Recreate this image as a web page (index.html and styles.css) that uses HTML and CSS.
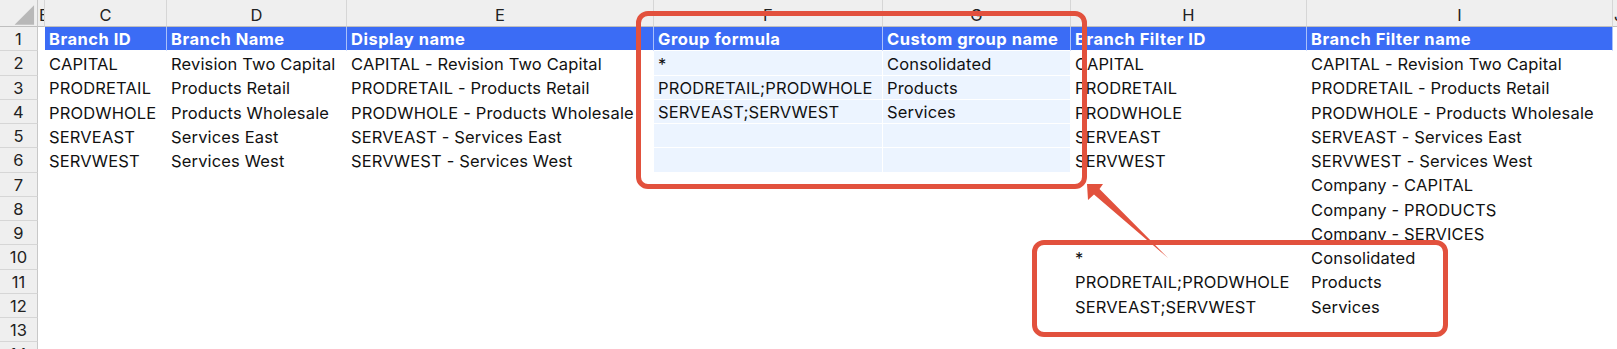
FILE: index.html
```html
<!DOCTYPE html>
<html>
<head>
<meta charset="utf-8">
<link rel="stylesheet" href="styles.css">
</head>
<body>
<div class="page">
<div class="sheet">
  <div class="ch corner"><svg width="38" height="27" viewBox="0 0 38 27"><polygon points="15,25 35,5 35,25" fill="#b8b8b8"/></svg></div>
  <div class="ch chb">B</div>
  <div class="ch">C</div>
  <div class="ch">D</div>
  <div class="ch">E</div>
  <div class="ch">F</div>
  <div class="ch">G</div>
  <div class="ch">H</div>
  <div class="ch">I</div>
  <div class="ch chj">J</div>

  <div class="rh">1</div><div class="c"></div>
  <div class="c hd">Branch ID</div><div class="c hd">Branch Name</div><div class="c hd">Display name</div><div class="c hd">Group formula</div><div class="c hd">Custom group name</div><div class="c hd">Branch Filter ID</div><div class="c hd">Branch Filter name</div><div class="c"></div>

  <div class="rh">2</div><div class="c"></div>
  <div class="c">CAPITAL</div><div class="c">Revision Two Capital</div><div class="c">CAPITAL - Revision Two Capital</div><div class="c lb">*</div><div class="c lb">Consolidated</div><div class="c">CAPITAL</div><div class="c">CAPITAL - Revision Two Capital</div><div class="c"></div>

  <div class="rh">3</div><div class="c"></div>
  <div class="c">PRODRETAIL</div><div class="c">Products Retail</div><div class="c">PRODRETAIL - Products Retail</div><div class="c lb">PRODRETAIL;PRODWHOLE</div><div class="c lb">Products</div><div class="c">PRODRETAIL</div><div class="c">PRODRETAIL - Products Retail</div><div class="c"></div>

  <div class="rh">4</div><div class="c"></div>
  <div class="c">PRODWHOLE</div><div class="c">Products Wholesale</div><div class="c">PRODWHOLE - Products Wholesale</div><div class="c lb">SERVEAST;SERVWEST</div><div class="c lb">Services</div><div class="c">PRODWHOLE</div><div class="c">PRODWHOLE - Products Wholesale</div><div class="c"></div>

  <div class="rh">5</div><div class="c"></div>
  <div class="c">SERVEAST</div><div class="c">Services East</div><div class="c">SERVEAST - Services East</div><div class="c lb"></div><div class="c lb"></div><div class="c">SERVEAST</div><div class="c">SERVEAST - Services East</div><div class="c"></div>

  <div class="rh">6</div><div class="c"></div>
  <div class="c">SERVWEST</div><div class="c">Services West</div><div class="c">SERVWEST - Services West</div><div class="c lb"></div><div class="c lb"></div><div class="c">SERVWEST</div><div class="c">SERVWEST - Services West</div><div class="c"></div>

  <div class="rh">7</div><div class="c"></div>
  <div class="c"></div><div class="c"></div><div class="c"></div><div class="c"></div><div class="c"></div><div class="c"></div><div class="c">Company - CAPITAL</div><div class="c"></div>

  <div class="rh">8</div><div class="c"></div>
  <div class="c"></div><div class="c"></div><div class="c"></div><div class="c"></div><div class="c"></div><div class="c"></div><div class="c">Company - PRODUCTS</div><div class="c"></div>

  <div class="rh">9</div><div class="c"></div>
  <div class="c"></div><div class="c"></div><div class="c"></div><div class="c"></div><div class="c"></div><div class="c"></div><div class="c">Company - SERVICES</div><div class="c"></div>

  <div class="rh">10</div><div class="c"></div>
  <div class="c"></div><div class="c"></div><div class="c"></div><div class="c"></div><div class="c"></div><div class="c">*</div><div class="c">Consolidated</div><div class="c"></div>

  <div class="rh">11</div><div class="c"></div>
  <div class="c"></div><div class="c"></div><div class="c"></div><div class="c"></div><div class="c"></div><div class="c">PRODRETAIL;PRODWHOLE</div><div class="c">Products</div><div class="c"></div>

  <div class="rh">12</div><div class="c"></div>
  <div class="c"></div><div class="c"></div><div class="c"></div><div class="c"></div><div class="c"></div><div class="c">SERVEAST;SERVWEST</div><div class="c">Services</div><div class="c"></div>

  <div class="rh">13</div><div class="c"></div>
  <div class="c"></div><div class="c"></div><div class="c"></div><div class="c"></div><div class="c"></div><div class="c"></div><div class="c"></div><div class="c"></div>

  <div class="rh">14</div><div class="c"></div>
  <div class="c"></div><div class="c"></div><div class="c"></div><div class="c"></div><div class="c"></div><div class="c"></div><div class="c"></div><div class="c"></div>
</div>

<div class="annot">
  <div class="box box-top"></div>
  <div class="box box-bottom"></div>
  <svg class="arrow" width="1617" height="349" viewBox="0 0 1617 349"><polygon points="1087,184 1103,184 1099.5,189 1168,258 1094,194.5 1088,200" fill="#e2513d"/></svg>
</div>
</div>
</body>
</html>
```
FILE: styles.css
```css
* { box-sizing: border-box; }
html, body { margin: 0; padding: 0; background: #ffffff; }
body { width: 1617px; height: 349px; overflow: hidden; }

.page { position: relative; width: 1617px; height: 349px; overflow: hidden; }

.sheet {
  display: grid;
  grid-template-columns: 38px 7px 122px 180px 307px 229px 188px 236px 306px 4px;
  grid-template-rows: 27px repeat(14, 24.25px);
  font-family: Inter, "Liberation Sans", sans-serif;
  font-size: 16.5px;
  letter-spacing: 0.15px;
  color: #111111;
}

.ch {
  background: #efefef;
  border-right: 1px solid #d6d6d6;
  border-bottom: 1px solid #bfbfbf;
  display: flex;
  align-items: center;
  justify-content: center;
  padding-top: 3px;
  color: #222222;
  overflow: hidden;
  white-space: nowrap;
}
.corner { padding: 0; border-right: 1px solid #c8c8c8; }
.corner svg { display: block; }
.chb { justify-content: flex-start; padding-left: 1px; }
.chj { justify-content: flex-start; padding-left: 1px; border-right: none; }

.rh {
  background: #efefef;
  border-right: 1px solid #c8c8c8;
  border-bottom: 1px solid #d6d6d6;
  display: flex;
  align-items: center;
  justify-content: center;
  padding-top: 1px;
  color: #222222;
  overflow: hidden;
}

.c {
  display: flex;
  align-items: center;
  padding: 1.5px 4px 0 4px;
  white-space: nowrap;
  overflow: hidden;
}

.hd {
  background: #3b6cf5;
  color: #ffffff;
  font-weight: 700;
  letter-spacing: 0.5px;
  border-right: 1px solid #a9c0fa;
  border-bottom: 1px solid #ffffff;
}

.lb {
  background: #ecf4ff;
  border-right: 1px solid #ffffff;
  border-bottom: 1px solid #ffffff;
}

.annot { position: absolute; left: 0; top: 0; width: 1617px; height: 349px; pointer-events: none; }
.box { position: absolute; border: 5px solid #e2513d; border-radius: 12px; }
.box-top { left: 636px; top: 11px; width: 451px; height: 178px; }
.box-bottom { left: 1032px; top: 240px; width: 416px; height: 97px; }
.arrow { position: absolute; left: 0; top: 0; }
```
